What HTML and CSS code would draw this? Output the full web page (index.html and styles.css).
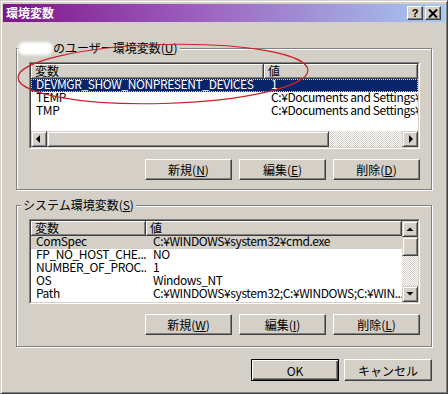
FILE: index.html
```html
<!DOCTYPE html>
<html lang="ja">
<head>
  <meta charset="UTF-8">
  <title>環境変数</title>
  <link rel="stylesheet" href="styles.css">
</head>
<body>
  <div class="window">
    <div class="titlebar">
      <span class="title">環境変数</span>
      <div class="cap-btns">
        <span class="cap-btn help">?</span>
        <span class="cap-btn">
          <svg width="10" height="9" viewBox="0 0 10 9"><path d="M1 0.5 L9 8.5 M9 0.5 L1 8.5" stroke="#000" stroke-width="2"/></svg>
        </span>
      </div>
    </div>

    <div class="content">
      <fieldset class="group user">
        <legend><span class="blur-name"></span>のユーザー環境変数(<u>U</u>)</legend>
        <div class="listview">
          <div class="lv-inner">
            <div class="lv-header">
              <div class="hd c1">変数</div>
              <div class="hd c2">値</div>
            </div>
            <div class="lv-rows">
              <div class="row selected"><span class="c1">DEVMGR_SHOW_NONPRESENT_DEVICES</span><span class="c2">1</span></div>
              <div class="row"><span class="c1">TEMP</span><span class="c2">C:¥Documents and Settings¥lsd¥Local Settings¥Temp</span></div>
              <div class="row"><span class="c1">TMP</span><span class="c2">C:¥Documents and Settings¥lsd¥Local Settings¥Temp</span></div>
            </div>
            <div class="hscroll">
              <span class="sb-btn"><svg width="14" height="14" viewBox="0 0 14 14"><polygon points="4,7 8,3 8,11" fill="#000"/></svg></span>
              <span class="sb-thumb h"></span>
              <span class="sb-track"></span>
              <span class="sb-btn"><svg width="14" height="14" viewBox="0 0 14 14"><polygon points="10,7 6,3 6,11" fill="#000"/></svg></span>
            </div>
          </div>
        </div>
        <div class="btn-row">
          <button class="btn">新規(<u>N</u>)</button>
          <button class="btn">編集(<u>E</u>)</button>
          <button class="btn">削除(<u>D</u>)</button>
        </div>
      </fieldset>

      <fieldset class="group sys">
        <legend>システム環境変数(<u>S</u>)</legend>
        <div class="listview">
          <div class="lv-inner split">
            <div class="lv-main">
              <div class="lv-header">
                <div class="hd c1">変数</div>
                <div class="hd c2">値</div>
              </div>
              <div class="lv-rows">
                <div class="row inactive"><span class="c1">ComSpec</span><span class="c2">C:¥WINDOWS¥system32¥cmd.exe</span></div>
                <div class="row"><span class="c1">FP_NO_HOST_CHE...</span><span class="c2">NO</span></div>
                <div class="row"><span class="c1">NUMBER_OF_PROC...</span><span class="c2">1</span></div>
                <div class="row"><span class="c1">OS</span><span class="c2">Windows_NT</span></div>
                <div class="row"><span class="c1">Path</span><span class="c2">C:¥WINDOWS¥system32;C:¥WINDOWS;C:¥WIN...</span></div>
                <div class="row"><span class="c1">PATHEXT</span><span class="c2">.COM;.EXE;.BAT;.CMD;.VBS;.VBE;.JS;.JSE;...</span></div>
              </div>
            </div>
            <div class="vscroll">
              <span class="sb-btn"><svg width="14" height="14" viewBox="0 0 14 14"><polygon points="3.5,9 7,5.5 10.5,9" fill="#000"/></svg></span>
              <span class="sb-thumb v"></span>
              <span class="sb-track"></span>
              <span class="sb-btn"><svg width="14" height="14" viewBox="0 0 14 14"><polygon points="3.5,5 7,8.5 10.5,5" fill="#000"/></svg></span>
            </div>
          </div>
        </div>
        <div class="btn-row">
          <button class="btn">新規(<u>W</u>)</button>
          <button class="btn">編集(<u>I</u>)</button>
          <button class="btn">削除(<u>L</u>)</button>
        </div>
      </fieldset>

      <div class="dialog-btns">
        <button class="btn wide default">OK</button>
        <button class="btn wide">キャンセル</button>
      </div>
    </div>

    <!-- red marker drawn over the screenshot -->
    <svg class="annotation" width="448" height="394" viewBox="0 0 448 394">
      <ellipse cx="163" cy="74" rx="145" ry="29.5" transform="rotate(-1.5 163 74)" fill="none" stroke="#c8242a" stroke-width="1.2"/>
    </svg>
  </div>
</body>
</html>
```

FILE: styles.css
```css
html, body {
  margin: 0;
  overflow: hidden;
}

body {
  background: #d4d0c8;
  font-family: "Noto Sans CJK JP", sans-serif;
  font-size: 12px;
  color: #000;
}

.window {
  position: relative;
  width: 448px;
  height: 394px;
  box-sizing: border-box;
  border: 1px solid;
  border-color: #d4d0c8 #404040 #404040 #d4d0c8;
  box-shadow: inset 1px 1px #fff, inset -1px -1px #808080;
  padding: 3px 2px 2px;
  background: #d4d0c8;
}

/* title bar */

.titlebar {
  height: 18px;
  display: flex;
  align-items: center;
  justify-content: space-between;
  padding: 0 4px 0 3px;
  background: linear-gradient(to right, #7e1488, #9d62c0 45%, #a6caf0);
}

.title {
  color: #fff;
  font-weight: bold;
  line-height: 18px;
}

.cap-btns {
  display: flex;
  gap: 2px;
}

.cap-btn {
  width: 16px;
  height: 14px;
  box-sizing: border-box;
  display: flex;
  align-items: center;
  justify-content: center;
  background: #d4d0c8;
  border: 1px solid;
  border-color: #fff #404040 #404040 #fff;
  box-shadow: inset -1px -1px #808080;
  font-family: "Liberation Sans", sans-serif;
  font-weight: bold;
  font-size: 11px;
  line-height: 12px;
}

/* group boxes */

.content {
  padding: 0 13px;
}

.group {
  margin: 19px 0 0;
  padding: 7px 11px 9px 12px;
  border: 1px solid #808080;
  box-shadow: inset 1px 1px #fff, 1px 1px #fff;
  min-width: 0;
}

.group.sys {
  margin-top: 8px;
  padding-bottom: 11px;
}

.group legend {
  margin-left: -8px;
  padding: 0 2px;
  line-height: 14px;
  background: #d4d0c8;
}

.blur-name {
  display: inline-block;
  width: 35px;
  height: 13px;
  margin-left: -5px;
  vertical-align: -2px;
  background: #fff;
  border-radius: 7px;
  filter: blur(1.5px);
}

/* list views */

.listview {
  border: 1px solid;
  border-color: #808080 #fff #fff #808080;
}

.lv-inner {
  border: 1px solid;
  border-color: #404040 #d4d0c8 #d4d0c8 #404040;
  background: #fff;
}

.lv-inner.split {
  display: flex;
}

.lv-main {
  flex: 1;
  min-width: 0;
}

.lv-header {
  display: flex;
  height: 15px;
}

.hd {
  box-sizing: border-box;
  height: 15px;
  line-height: 14px;
  padding-left: 4px;
  background: #d4d0c8;
  border-right: 1px solid #404040;
  border-bottom: 1px solid #404040;
  box-shadow: inset 1px 1px #fff, inset -1px -1px #808080;
}

.user .c1 {
  width: 233px;
}

.sys .c1 {
  width: 115px;
}

.c2 {
  flex: 1;
}

.lv-rows {
  height: 52px;
  overflow: hidden;
}

.sys .lv-rows {
  height: 66px;
}

.row {
  display: flex;
  height: 13px;
  line-height: 10px;
  white-space: nowrap;
  letter-spacing: -0.4px;
}

.row span {
  box-sizing: border-box;
  overflow-x: clip;
  flex-shrink: 0;
}

.row .c1 {
  padding-left: 5px;
}

.row .c2 {
  flex: 1;
  padding-left: 7px;
}

.row.selected {
  background: #0a246a;
  color: #fff;
  outline: 1px dotted #e6d38f;
  outline-offset: -1px;
}

.row.inactive {
  background: #d4d0c8;
}

/* scroll bars */

.hscroll {
  display: flex;
  height: 16px;
}

.vscroll {
  display: flex;
  flex-direction: column;
  width: 16px;
}

.sb-btn,
.sb-thumb {
  box-sizing: border-box;
  display: flex;
  align-items: center;
  justify-content: center;
  width: 16px;
  height: 16px;
  background: #d4d0c8;
  border: 1px solid;
  border-color: #d4d0c8 #404040 #404040 #d4d0c8;
  box-shadow: inset 1px 1px #fff, inset -1px -1px #808080;
  flex-shrink: 0;
}

.sb-thumb.h {
  width: 282px;
}

.sb-thumb.v {
  height: 19px;
}

.sb-track {
  flex: 1;
  background: conic-gradient(#fff 25%, #d4d0c8 0 50%, #fff 0 75%, #d4d0c8 0);
  background-size: 2px 2px;
}

/* buttons */

.btn-row {
  display: flex;
  justify-content: flex-end;
  gap: 7px;
  margin-top: 10px;
}

.btn {
  width: 87px;
  height: 21px;
  padding: 0;
  font: inherit;
  color: #000;
  background: #d4d0c8;
  border: 1px solid;
  border-color: #fff #404040 #404040 #fff;
  box-shadow: inset -1px -1px #808080;
}

.dialog-btns {
  display: flex;
  justify-content: flex-end;
  gap: 5px;
  margin-top: 12px;
}

.btn.wide {
  width: 88px;
  height: 22px;
}

.btn.default {
  border-color: #000;
  box-shadow: inset 1px 1px #fff, inset -1px -1px #404040, inset -2px -2px #808080;
}

.annotation {
  position: absolute;
  left: -1px;
  top: -1px;
  pointer-events: none;
}
```
